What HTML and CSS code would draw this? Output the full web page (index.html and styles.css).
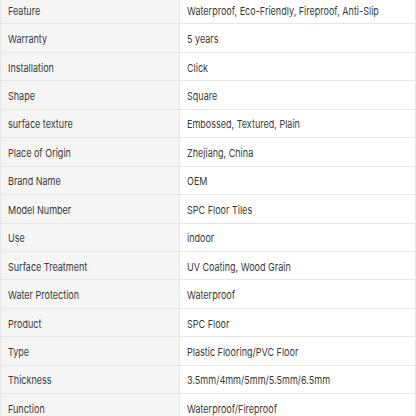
FILE: index.html
```html
<!DOCTYPE html>
<html>
<head>
<meta charset="utf-8">
<link rel="stylesheet" href="styles.css">
</head>
<body>
<table class="spec">
<tbody>
<tr><td class="k"><span class="t">Feature</span></td><td class="v"><span class="t">Waterproof, Eco-Friendly, Fireproof, Anti-Slip</span></td></tr>
<tr><td class="k"><span class="t">Warranty</span></td><td class="v"><span class="t">5 years</span></td></tr>
<tr><td class="k"><span class="t">Installation</span></td><td class="v"><span class="t">Click</span></td></tr>
<tr><td class="k"><span class="t">Shape</span></td><td class="v"><span class="t">Square</span></td></tr>
<tr><td class="k"><span class="t">surface texture</span></td><td class="v"><span class="t">Embossed, Textured, Plain</span></td></tr>
<tr><td class="k"><span class="t">Place of Origin</span></td><td class="v"><span class="t">Zhejiang, China</span></td></tr>
<tr><td class="k"><span class="t">Brand Name</span></td><td class="v"><span class="t">OEM</span></td></tr>
<tr><td class="k"><span class="t">Model Number</span></td><td class="v"><span class="t">SPC Floor Tiles</span></td></tr>
<tr><td class="k"><span class="t">Use</span></td><td class="v"><span class="t">indoor</span></td></tr>
<tr><td class="k"><span class="t">Surface Treatment</span></td><td class="v"><span class="t">UV Coating, Wood Grain</span></td></tr>
<tr><td class="k"><span class="t">Water Protection</span></td><td class="v"><span class="t">Waterproof</span></td></tr>
<tr><td class="k"><span class="t">Product</span></td><td class="v"><span class="t">SPC Floor</span></td></tr>
<tr><td class="k"><span class="t">Type</span></td><td class="v"><span class="t">Plastic Flooring/PVC Floor</span></td></tr>
<tr><td class="k"><span class="t">Thickness</span></td><td class="v"><span class="t">3.5mm/4mm/5mm/5.5mm/6.5mm</span></td></tr>
<tr><td class="k"><span class="t">Function</span></td><td class="v"><span class="t">Waterproof/Fireproof</span></td></tr>
</tbody>
</table>
</body>
</html>
```
FILE: styles.css
```css
html, body {
  margin: 0;
  padding: 0;
  background: #fff;
}
body {
  font-family: Inter, "Noto Sans", sans-serif;
  font-size: 11px;
  color: #3a3a3a;
  overflow: hidden;
}
.spec {
  border-collapse: collapse;
  width: 416px;
  margin-top: -5px;
  table-layout: fixed;
}
.spec td {
  border: 1px solid #e6e6e6;
  height: 28.45px;
  padding: 2px 0 0 7px;
  box-sizing: border-box;
  vertical-align: middle;
  line-height: 14px;
  white-space: nowrap;
  overflow: visible;
}
.spec .k {
  width: 179px;
  background: #f5f5f5;
}
.spec .v {
  background: #fff;
}
.t {
  display: inline-block;
  transform: scaleX(0.82);
  transform-origin: left center;
}
```
